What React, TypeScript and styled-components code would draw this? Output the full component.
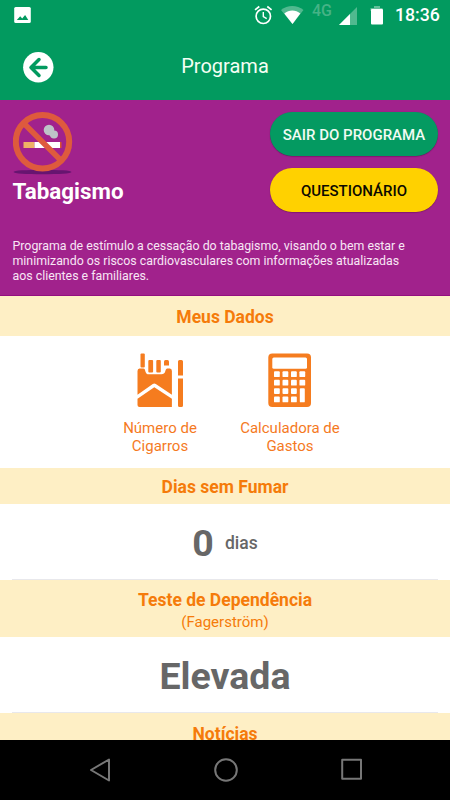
import React from 'react';
import styled, { createGlobalStyle } from 'styled-components';

const GlobalStyle = createGlobalStyle`
  * { box-sizing: border-box; }
  html, body { margin: 0; padding: 0; }
  body { background: #000; font-family: Roboto, "Liberation Sans", sans-serif; }
`;

const Screen = styled.div`
  width: 450px;
  height: 800px;
  overflow: hidden;
  display: flex;
  flex-direction: column;
  background: #fff;
`;

const StatusBar = styled.div`
  height: 32px;
  flex: none;
  display: flex;
  justify-content: space-between;
  background: #029a5f;
  color: #fff;
  svg { display: block; }
`;

const StatusIcons = styled.div`
  display: flex;
  align-items: flex-start;
`;

const Spacer = styled.span<{ $w: number }>`
  width: ${p => p.$w}px;
`;

const Clock = styled.span`
  width: 55px;
  padding-top: 5px;
  font-size: 17.7px;
  line-height: 21px;
  font-weight: 500;
`;

const Header = styled.header`
  height: 68px;
  flex: none;
  display: grid;
  grid-template-columns: 76px 1fr 76px;
  background: #029a5f;
  color: #f4fff4;
`;

const BackButton = styled.button`
  margin: 19px 0 0 22px;
  padding: 0;
  width: 32px;
  height: 32px;
  border: 0;
  background: none;
  svg { display: block; }
`;

const HeaderTitle = styled.h1`
  margin: 0;
  padding-top: 22px;
  font-size: 20px;
  line-height: 24px;
  font-weight: 400;
  text-align: center;
`;

const Hero = styled.section`
  height: 196px;
  flex: none;
  padding: 12.4px 12px 0 12.5px;
  background: #a1228c;
  border-bottom: 1px solid #930f80;
  color: #fff;
`;

const HeroTop = styled.div`
  height: 127px;
  display: flex;
  justify-content: space-between;
  svg { display: block; }
`;

const ProgramName = styled.h2`
  margin: 1px 0 0;
  font-size: 22.4px;
  line-height: 28px;
  font-weight: 700;
`;

const Actions = styled.div`
  display: flex;
  flex-direction: column;
  gap: 12px;
`;

const ActionButton = styled.button<{ $bg: string; $fg: string }>`
  width: 168px;
  height: 44px;
  padding: 2px 0 0;
  border: 0;
  border-radius: 22px;
  background: ${p => p.$bg};
  color: ${p => p.$fg};
  font: 500 15px/18px Roboto, sans-serif;
  white-space: nowrap;
  box-shadow: 0 0.5px 1px rgba(70, 0, 60, 0.6);
`;

const Description = styled.p`
  margin: 0;
  font-size: 12.37px;
  line-height: 14.6px;
  color: #f8e6f5;
  white-space: nowrap;
`;

const Band = styled.div<{ $height: number; $top: number }>`
  height: ${p => p.$height}px;
  flex: none;
  padding-top: ${p => p.$top}px;
  background: #feefc5;
  color: #f57b0a;
  text-align: center;
`;

const BandTitle = styled.h3`
  margin: 0;
  font-size: 17.5px;
  line-height: 22px;
  font-weight: 700;
`;

const BandNote = styled.div`
  font-size: 15px;
  line-height: 22px;
`;

const Divider = styled.div`
  height: 1px;
  flex: none;
  margin: 0 12px;
  background: #e8e8ec;
`;

const Tiles = styled.div`
  height: 132px;
  flex: none;
  display: grid;
  grid-template-columns: 130px 130px;
  justify-content: center;
  padding-top: 16px;
`;

const Tile = styled.div`
  display: flex;
  flex-direction: column;
  align-items: center;
  color: #f57a1f;
  font-size: 15px;
  line-height: 17.6px;
  text-align: center;
  white-space: nowrap;
  svg { display: block; margin-bottom: 12px; }
`;

const Value = styled.div`
  height: 75px;
  flex: none;
  display: flex;
  justify-content: center;
  align-items: center;
  gap: 11px;
  padding-top: 3px;
  color: #676767;
  font-weight: 700;
  font-size: 37.5px;
  line-height: 46px;
`;

const Unit = styled.span`
  font-size: 17.5px;
  line-height: 22px;
  font-weight: 500;
`;

const NavBar = styled.nav`
  height: 60px;
  flex: none;
  display: flex;
  justify-content: space-between;
  padding: 17px 87px 0 88px;
  background: #000;
  svg { display: block; }
`;

const AlarmIcon = () => (
  <svg width="20" height="32" viewBox="0 0 20 32" fill="none" stroke="#fff" strokeWidth="1.7">
    <circle cx="10.300" cy="16.300" r="7.200" />
    <path d="M10.300 11.900v4.800l3.400 2" strokeWidth="1.4" />
    <path d="M2 9.900l4.300-3.400M18.600 9.900l-4.300-3.400" />
  </svg>
);

const WifiIcon = () => (
  <svg width="24" height="32" viewBox="0 0 24 32">
    <path d="M0 10C6.500 4.600 16 4.600 22.500 10L11.500 24z" fill="#51b98f" />
    <path d="M3.300 13.600c4.500-4 11.500-4 16 0L11.500 24z" fill="#fff" />
  </svg>
);

const MobileSignal = () => (
  <svg width="48" height="32" viewBox="0 0 48 32">
    <text x="0" y="16.400" fontSize="16" fontWeight="500" fontFamily="Roboto, sans-serif" fill="#45b386">4G</text>
    <path d="M45 7v18H27z" fill="#51b98f" />
    <path d="M38 14v11H27z" fill="#fff" />
  </svg>
);

const BatteryIcon = () => (
  <svg width="14" height="32" viewBox="0 0 14 32">
    <path d="M4 6h6v2h2.500v3h-12V8H4z" fill="#62c09a" />
    <rect x="1" y="9" width="12" height="15.500" rx="1" fill="#fff" />
  </svg>
);

const NoSmokingIcon = () => (
  <svg width="61" height="64" viewBox="0 0 61 64">
    <ellipse cx="29.500" cy="60" rx="29" ry="2.300" fill="#671570" />
    <g fill="#bdc3c7">
      <circle cx="36" cy="18" r="5.300" />
      <circle cx="41" cy="22.500" r="4" />
      <path d="M32 20l8 6 3-5z" />
    </g>
    <path d="M10.500 30h11v6h-11z" fill="#efb265" />
    <path d="M21.500 30H48v6H21.500z" fill="#fff" />
    <path d="M47 30h1.500v6H47z" fill="#d9532c" />
    <g fill="none" stroke="#de5a3d">
      <circle cx="29.500" cy="29.700" r="26.700" strokeWidth="6" />
      <path d="M11 11.500l37 37" strokeWidth="5.500" />
    </g>
  </svg>
);

const CigarettePackIcon = () => (
  <svg width="46" height="56" viewBox="0 0 46 56" fill="#f57c1f">
    <rect x="3.500" y="1.500" width="4.300" height="14" rx="1" />
    <rect x="11.300" y="8" width="4.800" height="12.500" rx="1" />
    <rect x="19.300" y="8" width="4.500" height="12.500" rx="1" />
    <path d="M27 9.500q0-1.500 1.500-1.500h2q1.500 0 1.500 1.500v4h-5z" />
    <path d="M.5 19q0-2.500 2-2.500h3.800c1.800 0 1.600 1.500 2.200 3.200.5 1.700 1.500 2.600 3.200 2.600h12.500c2.800 0 3.800-1.500 4.200-3.500.4-1.800 1.200-2.300 2.500-2.300h2q2 0 2 2.500v23.800L18.800 32q-1.500-1-3 0L.5 42.800z" />
    <path d="M.5 46.800L17.300 35.300l17.600 11.500V55H2.500q-2 0-2-2z" />
    <path d="M41 9.500q0-1.500 1.500-1.500h2q1.500 0 1.500 1.500v14h-5zM41 26.500h5v27q0 1.500-1.500 1.500h-2q-1.500 0-1.500-1.500z" />
  </svg>
);

const CalculatorIcon = () => (
  <svg width="44" height="56" viewBox="0 0 44 56">
    <rect x=".3" y="1.500" width="42.700" height="53.500" rx="4" fill="#f57c1f" />
    <g fill="#fff">
      <rect x="4.300" y="5.500" width="34.700" height="11.300" rx="1.500" />
      {[19.3, 27.8, 36.2, 44.5].map((y, row) =>
        [6, 14.5, 23, 31.4].map((x, col) =>
          col === 3 && row > 1 ? null : (
            <rect key={`${row}-${col}`} x={x} y={y} width="5.800" height="5.800" rx=".9" />
          )
        )
      )}
      <rect x="31.800" y="36.200" width="5" height="14.100" rx=".9" />
    </g>
  </svg>
);

export default function App() {
  return (
    <>
      <GlobalStyle />
      <Screen>
        <StatusBar>
          <svg width="40" height="32" viewBox="0 0 40 32">
            <rect x="14.200" y="7" width="16.600" height="16" rx="1.500" fill="#fff" />
            <path d="M16.800 20l3.400-3.700 2 2.200 2.900-3.500 3.200 5z" fill="#029a5f" />
          </svg>
          <StatusIcons>
            <AlarmIcon />
            <Spacer $w={8} />
            <WifiIcon />
            <Spacer $w={7} />
            <MobileSignal />
            <Spacer $w={10} />
            <BatteryIcon />
            <Spacer $w={11} />
            <Clock>18:36</Clock>
          </StatusIcons>
        </StatusBar>

        <Header>
          <BackButton aria-label="Voltar">
            <svg width="32" height="32" viewBox="0 0 32 32">
              <circle cx="16.300" cy="16.300" r="15.200" fill="#fff" />
              <path d="M17 8.500L9 16.500l8 8M9.500 16.500H24" fill="none" stroke="#029a5f" strokeWidth="3.500" strokeLinecap="round" strokeLinejoin="round" />
            </svg>
          </BackButton>
          <HeaderTitle>Programa</HeaderTitle>
        </Header>

        <Hero>
          <HeroTop>
            <div>
              <NoSmokingIcon />
              <ProgramName>Tabagismo</ProgramName>
            </div>
            <Actions>
              <ActionButton $bg="#049a61" $fg="#f1fbf3">SAIR DO PROGRAMA</ActionButton>
              <ActionButton $bg="#ffd100" $fg="#0b0900">QUESTIONÁRIO</ActionButton>
            </Actions>
          </HeroTop>
          <Description>
            Programa de estímulo a cessação do tabagismo, visando o bem estar e<br />
            minimizando os riscos cardiovasculares com informações atualizadas<br />
            aos clientes e familiares.
          </Description>
        </Hero>

        <Band $height={40} $top={10}>
          <BandTitle>Meus Dados</BandTitle>
        </Band>
        <Tiles>
          <Tile>
            <CigarettePackIcon />
            <span>Número de<br />Cigarros</span>
          </Tile>
          <Tile>
            <CalculatorIcon />
            <span>Calculadora de<br />Gastos</span>
          </Tile>
        </Tiles>

        <Band $height={36} $top={8}>
          <BandTitle>Dias sem Fumar</BandTitle>
        </Band>
        <Value>
          0<Unit>dias</Unit>
        </Value>

        <Divider />
        <Band $height={57} $top={9}>
          <BandTitle>Teste de Dependência</BandTitle>
          <BandNote>(Fagerström)</BandNote>
        </Band>
        <Value>Elevada</Value>

        <Divider />
        <Band $height={27} $top={10}>
          <BandTitle>Notícias</BandTitle>
        </Band>

        <NavBar>
          <svg width="24" height="26" viewBox="0 0 24 26" fill="none" stroke="#777" strokeWidth="2" strokeLinejoin="round">
            <path d="M21 2.500v21L3 13z" />
          </svg>
          <svg width="26" height="26" viewBox="0 0 26 26" fill="none" stroke="#777" strokeWidth="2">
            <circle cx="12" cy="13" r="10.800" />
          </svg>
          <svg width="22" height="26" viewBox="0 0 22 26" fill="none" stroke="#777" strokeWidth="2" strokeLinejoin="round">
            <rect x="1.200" y="2.800" width="18.800" height="19" />
          </svg>
        </NavBar>
      </Screen>
    </>
  );
}
